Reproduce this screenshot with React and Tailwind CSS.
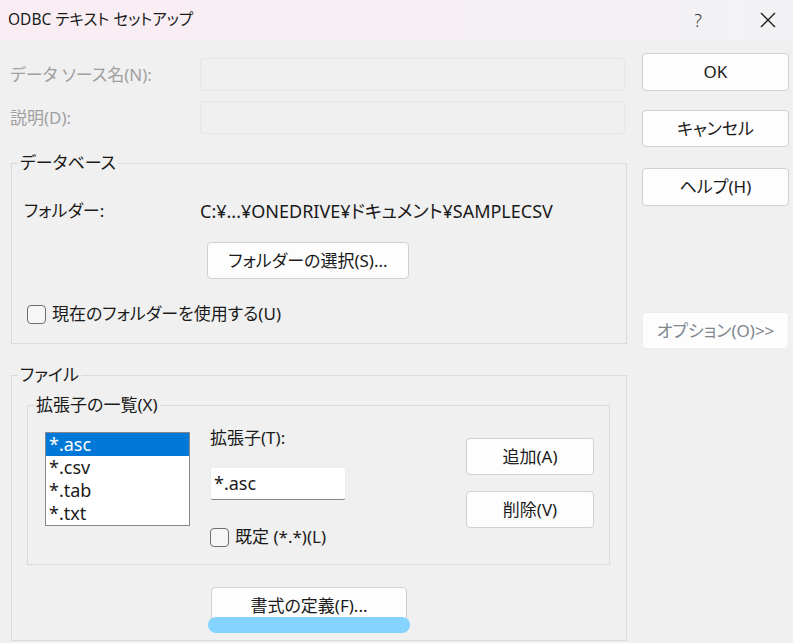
import React from 'react';

const font = "font-['Noto_Sans','Noto_Sans_CJK_JP',sans-serif] [font-feature-settings:'palt']";

const Button = ({ children, className = '' }) => (
  <button
    type="button"
    className={`flex items-center justify-center rounded-[4px] border border-[#d0d0d0] bg-[#fdfdfd] text-[17px] text-[#1a1a1a] ${className}`}
  >
    {children}
  </button>
);

const Checkbox = ({ label, className = '' }) => (
  <label className={`flex h-[20px] items-center gap-[6px] ${className}`}>
    <span className="h-[19px] w-[19px] rounded-[4px] border border-[#6e6e6e] bg-[#f6f6f6]" />
    <span className="text-[17px] leading-[20px] text-[#1a1a1a]">{label}</span>
  </label>
);

const extensions = ['*.asc', '*.csv', '*.tab', '*.txt'];

export default function App() {
  return (
    <div className={`flex h-[643px] w-[793px] flex-col overflow-hidden bg-[#f0f0f0] ${font}`}>
      {/* title bar */}
      <div className="flex h-[40px] shrink-0 items-center bg-linear-to-r from-[#f9edf3] via-[#f6eff4] to-[#f2f2f4] pl-[8px]">
        <span className="text-[15.5px] text-[#1a1a1a]">ODBC テキスト セットアップ</span>
        <div className="ml-auto flex h-full items-center">
          <span className="flex w-[46px] justify-center text-[18px] font-light text-[#333]">?</span>
          <span className="ml-[24px] mr-[2px] flex w-[46px] justify-center">
            <svg width="16" height="16" viewBox="0 0 16 16">
              <path d="M1 1L15 15M15 1L1 15" stroke="#1a1a1a" strokeWidth="1.3" fill="none" />
            </svg>
          </span>
        </div>
      </div>

      <div className="flex flex-1">
        {/* left side */}
        <div className="w-[626px] pt-[18px]">
          <div className="flex h-[33px] items-center pl-[10px]">
            <span className="w-[190px] text-[17px] text-[#a0a0a0]">データ ソース名(N):</span>
            <div className="h-[33px] w-[425px] rounded-[3px] border border-[#e6e6e6]" />
          </div>
          <div className="mt-[10px] flex h-[33px] items-center pl-[10px]">
            <span className="w-[190px] text-[17px] text-[#a0a0a0]">説明(D):</span>
            <div className="h-[33px] w-[425px] rounded-[3px] border border-[#e6e6e6]" />
          </div>

          <fieldset className="ml-[11px] mt-[19px] w-[616px] border border-[#dadada]">
            <legend className="ml-[6px] px-[2px] text-[17px] leading-[20px] text-[#1a1a1a]">データベース</legend>
            <div className="pb-[19px] pl-[12px] pt-[28px]">
              <div className="flex h-[20px] items-center text-[17px] text-[#1a1a1a]">
                <span className="w-[176px]">フォルダー:</span>
                <span className="text-[18px]">C:¥...¥ONEDRIVE¥ドキュメント¥SAMPLECSV</span>
              </div>
              <Button className="ml-[183px] mt-[21px] h-[37px] w-[202px] border-[#0067c0]">
                フォルダーの選択(S)...
              </Button>
              <Checkbox className="ml-[3px] mt-[25px]" label="現在のフォルダーを使用する(U)" />
            </div>
          </fieldset>

          <fieldset className="ml-[11px] mt-[21px] w-[616px] border border-[#dadada]">
            <legend className="ml-[6px] px-[2px] text-[17px] leading-[20px] text-[#1a1a1a]">ファイル</legend>
            <div className="pb-[16px] pl-[15px]">
              <fieldset className="mt-[10px] w-[583px] border border-[#dadada]">
                <legend className="ml-[6px] px-[2px] text-[17px] leading-[20px] text-[#1a1a1a]">拡張子の一覧(X)</legend>
                <div className="flex items-start pb-[17px] pl-[17px] pt-[13px]">
                  <ul className="mt-[4px] h-[94px] w-[145px] border border-[#828790] bg-white">
                    {extensions.map((ext, i) => (
                      <li
                        key={ext}
                        className={`h-[23px] pl-[3px] text-[18px] leading-[23px] ${i === 0 ? 'bg-[#0078d7] text-white' : 'text-[#1a1a1a]'}`}
                      >
                        {ext}
                      </li>
                    ))}
                  </ul>
                  <div className="ml-[20px] flex w-[136px] flex-col">
                    <span className="h-[20px] text-[17px] leading-[20px] text-[#1a1a1a]">拡張子(T):</span>
                    <div className="mt-[19px] flex h-[33px] w-[136px] items-center rounded-[3px] border border-b-[#868686] border-[#ececec] bg-white pl-[3px] text-[18px] text-[#1a1a1a]">
                      *.asc
                    </div>
                    <Checkbox className="mt-[27px] whitespace-nowrap" label="既定 (*.*)(L)" />
                  </div>
                  <div className="ml-[120px] mt-[10px] flex flex-col gap-[16px]">
                    <Button className="h-[37px] w-[128px]">追加(A)</Button>
                    <Button className="h-[37px] w-[128px]">削除(V)</Button>
                  </div>
                </div>
              </fieldset>
              <div className="relative ml-[184px] mt-[22px] w-[196px]">
                <Button className="h-[37px] w-[196px]">書式の定義(F)...</Button>
                <span className="absolute left-[-3px] top-[30px] h-[16px] w-[202px] rounded-full bg-[#84d4ff]" />
              </div>
            </div>
          </fieldset>
        </div>

        {/* right side */}
        <div className="ml-[16px] flex w-[147px] flex-col pt-[13px]">
          <Button className="h-[38px] w-[147px]">OK</Button>
          <Button className="mt-[19px] h-[37px] w-[147px]">キャンセル</Button>
          <Button className="mt-[21px] h-[38px] w-[147px]">ヘルプ(H)</Button>
          <Button className="mt-[106px] h-[37px] w-[147px] border-[#ececec] bg-[#f9f9f9] text-[#80868f]">
            オプション(O)&gt;&gt;
          </Button>
        </div>
      </div>
    </div>
  );
}
